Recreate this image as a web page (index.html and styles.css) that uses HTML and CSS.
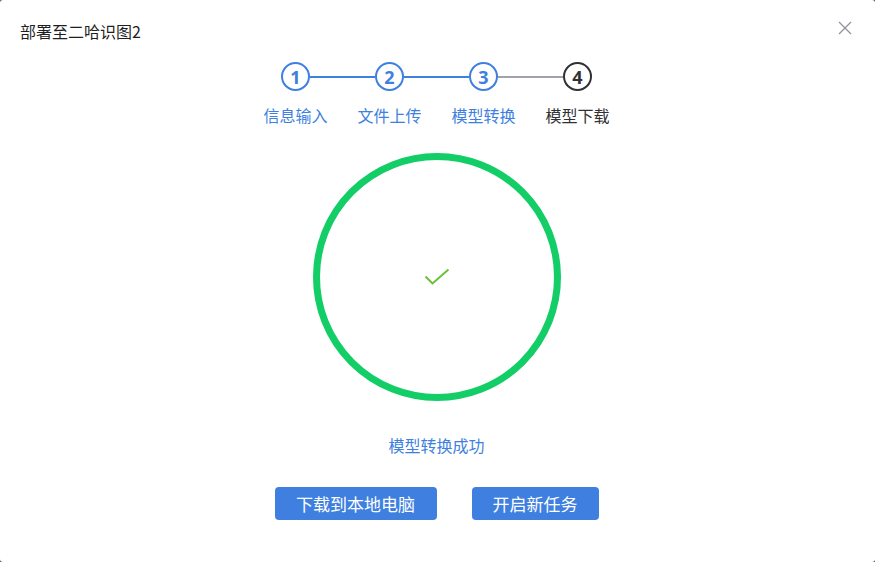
FILE: index.html
```html
<!DOCTYPE html>
<html lang="zh-CN">
<head>
<meta charset="utf-8">
<title>部署至二哈识图2</title>
<link rel="stylesheet" href="styles.css">
</head>
<body>
<div class="dialog">
  <div class="header">
    <span class="title">部署至二哈识图2</span>
    <svg class="close" width="14" height="14" viewBox="0 0 14 14"><path d="M1 1L13 13M13 1L1 13" stroke="#909399" stroke-width="1.3" fill="none"/></svg>
  </div>
  <div class="steps">
    <div class="step done">
      <div class="track"><span class="line hidden"></span><span class="dot">1</span><span class="line blue"></span></div>
      <div class="label">信息输入</div>
    </div>
    <div class="step done">
      <div class="track"><span class="line blue"></span><span class="dot">2</span><span class="line blue"></span></div>
      <div class="label">文件上传</div>
    </div>
    <div class="step done">
      <div class="track"><span class="line blue"></span><span class="dot">3</span><span class="line gray"></span></div>
      <div class="label">模型转换</div>
    </div>
    <div class="step current">
      <div class="track"><span class="line gray"></span><span class="dot">4</span><span class="line hidden"></span></div>
      <div class="label">模型下载</div>
    </div>
  </div>
  <div class="result">
    <div class="ring">
      <svg width="28" height="20" viewBox="0 0 28 20"><path d="M1.5 8.5L8.5 15.5L24.5 1.5" stroke="#67c23a" stroke-width="2" fill="none"/></svg>
    </div>
    <div class="msg">模型转换成功</div>
  </div>
  <div class="actions">
    <button class="btn wide">下载到本地电脑</button>
    <button class="btn">开启新任务</button>
  </div>
</div>
</body>
</html>
```
FILE: styles.css
```css
html, body {
  margin: 0;
  padding: 0;
  background: #5a5a5a;
}
body {
  font-family: "Noto Sans CJK SC", "Noto Sans", sans-serif;
}
.dialog {
  width: 875px;
  height: 562px;
  background: #fff;
  border-radius: 3px;
  box-sizing: border-box;
  padding-right: 2px;
  display: flex;
  flex-direction: column;
  align-items: center;
}
.header {
  align-self: stretch;
  display: flex;
  justify-content: space-between;
  align-items: flex-start;
  padding: 20px 21px 0 20px;
  height: 42px;
}
.title {
  font-size: 16px;
  line-height: 22px;
  color: #1f1f1f;
}
.close {
  margin-top: 1px;
}
.steps {
  display: flex;
}
.step {
  width: 94px;
  display: flex;
  flex-direction: column;
  align-items: center;
}
.track {
  display: flex;
  align-items: center;
  width: 100%;
}
.line {
  flex: 1;
  height: 2px;
}
.line.blue { background: #3e7fe0; }
.line.gray { background: #a0a3a9; }
.line.hidden { background: transparent; }
.dot {
  width: 29px;
  height: 29px;
  box-sizing: border-box;
  border: 2px solid #3e7fe0;
  border-radius: 50%;
  color: #3e7fe0;
  font-family: "Open Sans", "Noto Sans", sans-serif;
  font-weight: 700;
  font-size: 18px;
  display: flex;
  align-items: center;
  justify-content: center;
  line-height: 1;
}
.current .dot {
  border-color: #303133;
  color: #303133;
}
.label {
  margin-top: 13px;
  font-size: 16px;
  line-height: 22px;
  color: #3e7fe0;
  white-space: nowrap;
}
.current .label {
  color: #303133;
}
.result {
  display: flex;
  flex-direction: column;
  align-items: center;
  margin-top: 27px;
}
.ring {
  width: 248px;
  height: 248px;
  box-sizing: border-box;
  border: 7px solid #13ce66;
  border-radius: 50%;
  display: flex;
  align-items: center;
  justify-content: center;
}
.ring svg {
  margin-left: 2px;
  margin-top: 2px;
}
.msg {
  margin-top: 33px;
  font-size: 16px;
  line-height: 22px;
  color: #3e7fe0;
}
.actions {
  display: flex;
  gap: 35px;
  margin-top: 31px;
}
.btn {
  height: 33px;
  border: none;
  border-radius: 4px;
  background: #3e7fe0;
  color: #fff;
  font-family: "Noto Sans CJK SC", "Noto Sans", sans-serif;
  font-size: 17px;
  padding: 0 12px;
  width: 127px;
}
.btn.wide {
  width: 162px;
}
```
